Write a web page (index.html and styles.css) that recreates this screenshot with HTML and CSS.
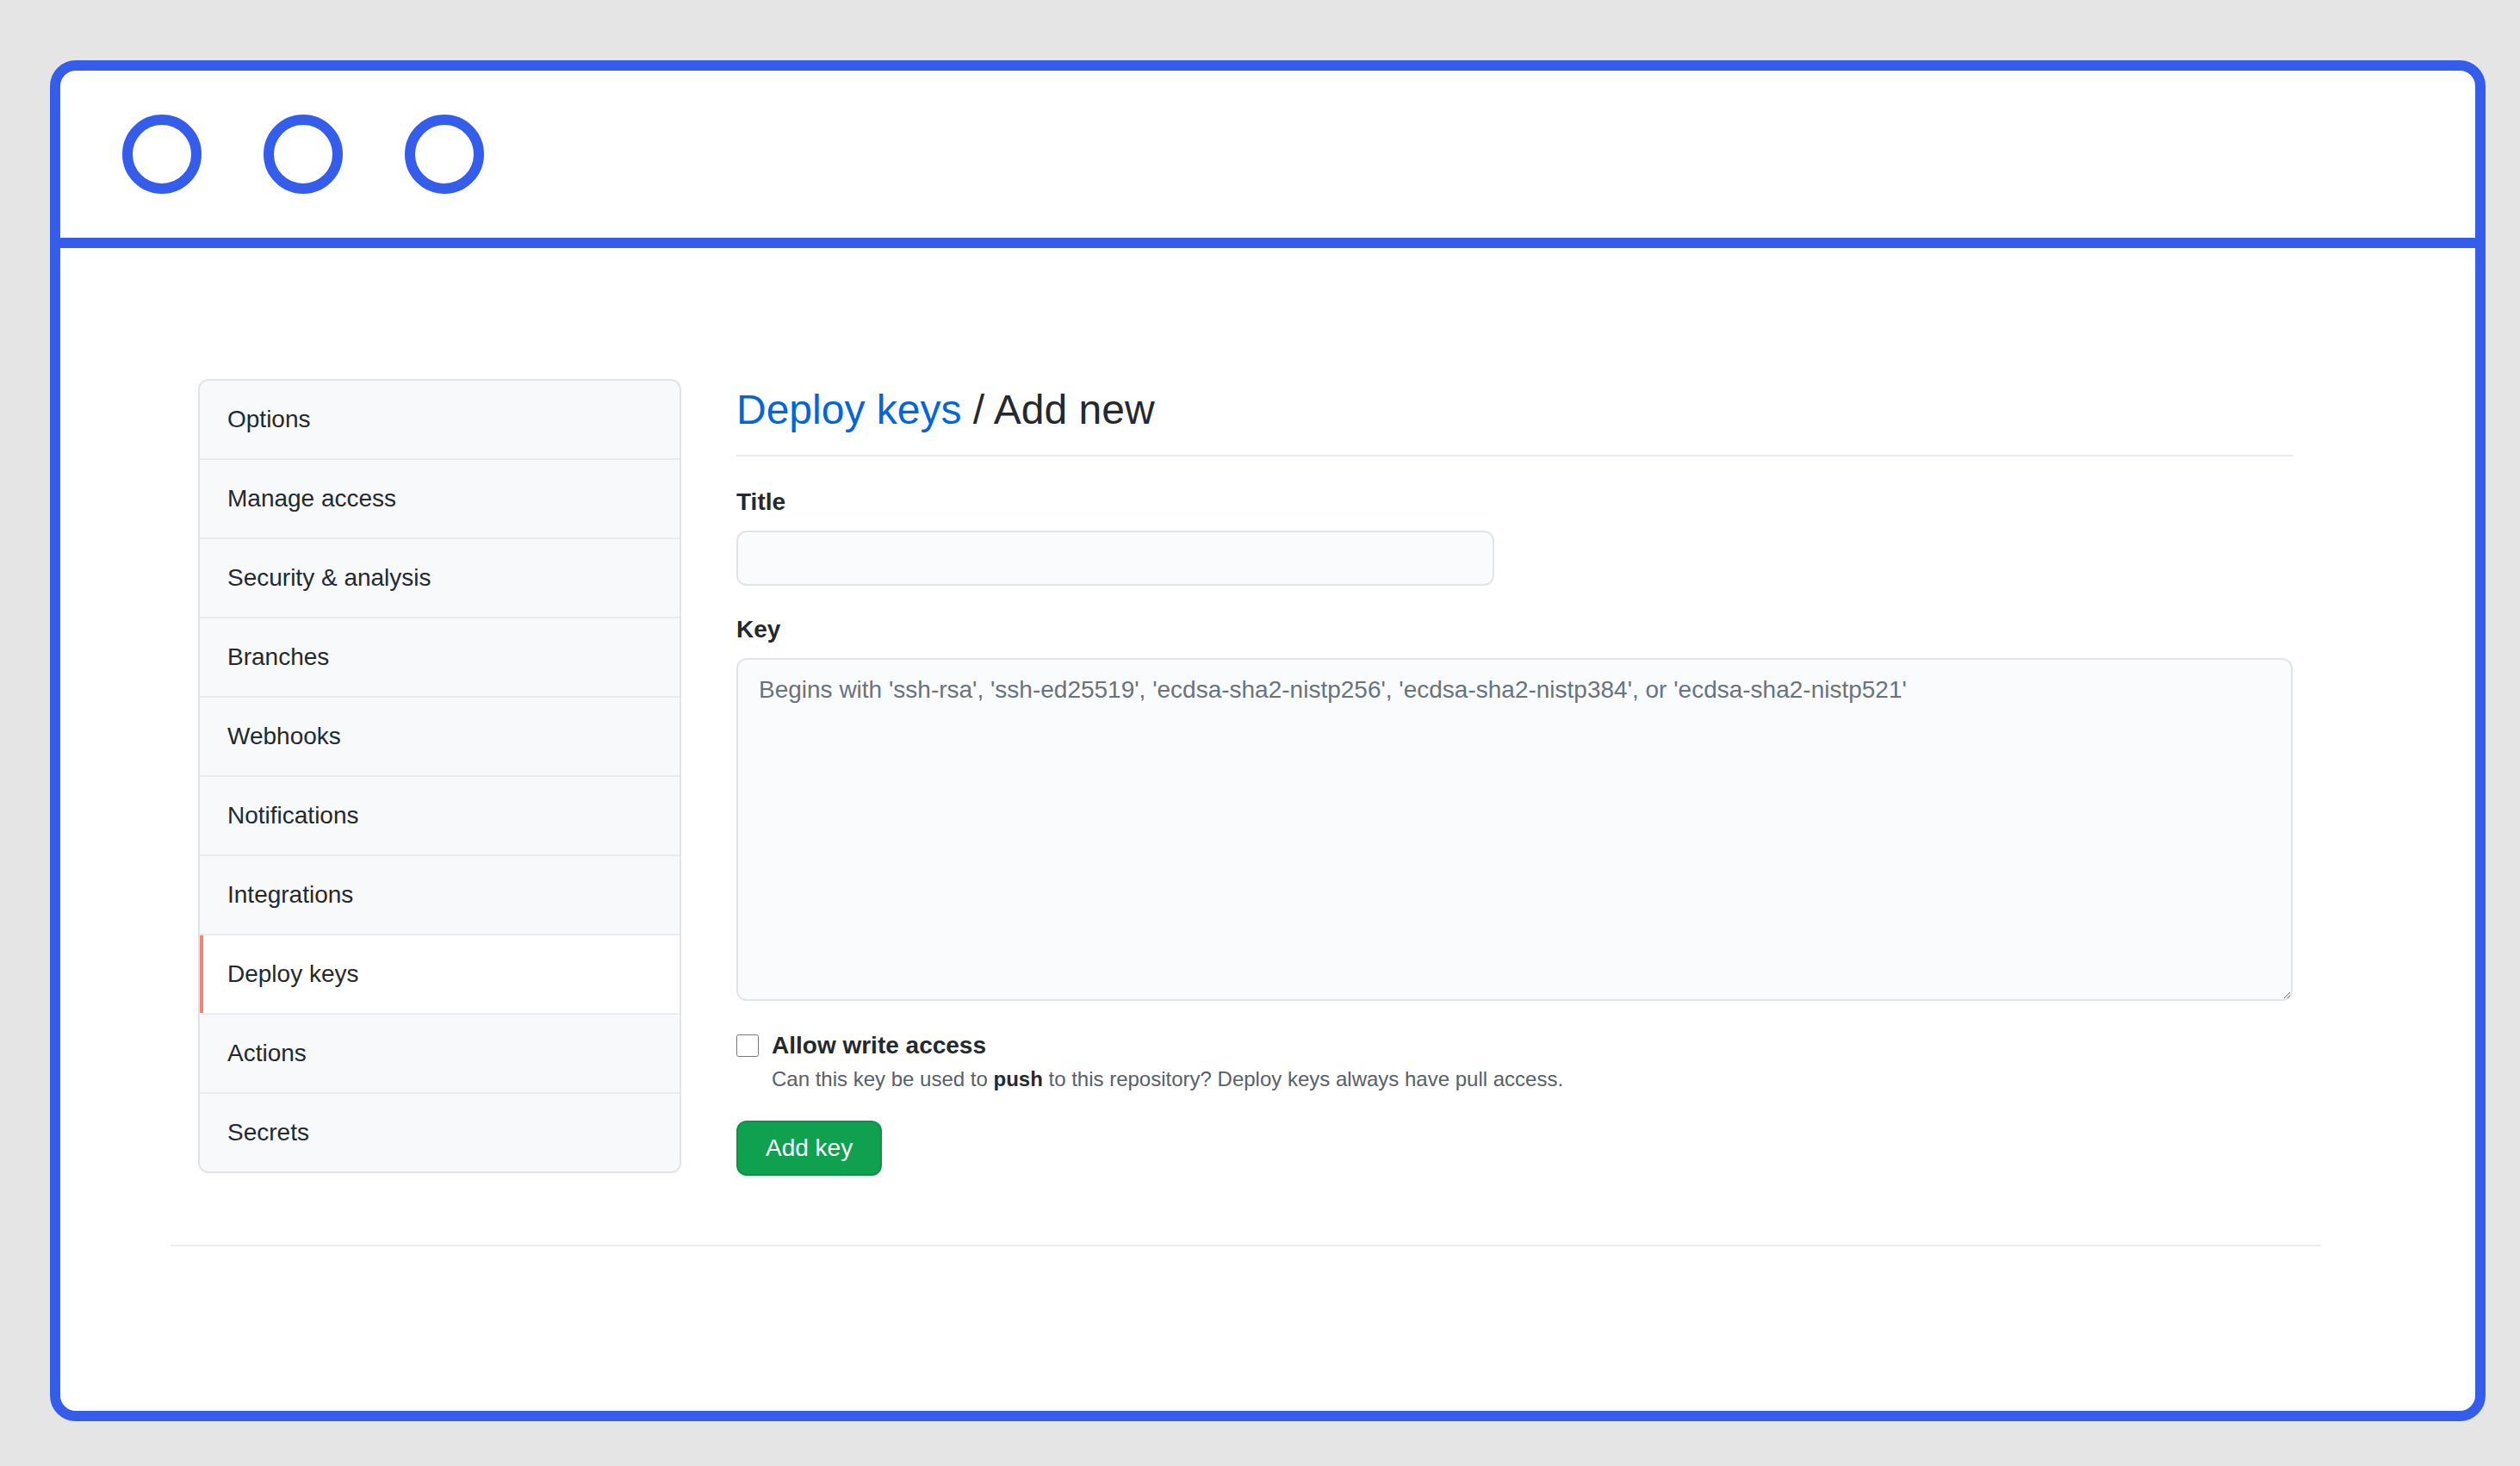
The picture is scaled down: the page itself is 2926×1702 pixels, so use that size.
FILE: index.html
```html
<!DOCTYPE html>
<html lang="en">
<head>
<meta charset="utf-8">
<title>Deploy keys / Add new</title>
<link rel="stylesheet" href="styles.css">
</head>
<body>
<div class="frame">
  <div class="titlebar">
    <span class="dot"></span>
    <span class="dot"></span>
    <span class="dot"></span>
  </div>
  <div class="page">
    <div class="container">
      <div class="layout">
        <nav class="menu">
          <a class="menu-item">Options</a>
          <a class="menu-item">Manage access</a>
          <a class="menu-item">Security &amp; analysis</a>
          <a class="menu-item">Branches</a>
          <a class="menu-item">Webhooks</a>
          <a class="menu-item">Notifications</a>
          <a class="menu-item">Integrations</a>
          <a class="menu-item selected">Deploy keys</a>
          <a class="menu-item">Actions</a>
          <a class="menu-item">Secrets</a>
        </nav>
        <main class="main">
          <h2 class="subhead"><a class="subhead-link">Deploy keys</a> / Add new</h2>
          <form class="form">
            <label class="label" for="title">Title</label>
            <input class="input" id="title" type="text">
            <label class="label label-key" for="key">Key</label>
            <textarea class="textarea" id="key" placeholder="Begins with 'ssh-rsa', 'ssh-ed25519', 'ecdsa-sha2-nistp256', 'ecdsa-sha2-nistp384', or 'ecdsa-sha2-nistp521'"></textarea>
            <div class="checkbox-group">
              <label class="checkbox-label"><input class="checkbox" type="checkbox"> Allow write access</label>
              <p class="note">Can this key be used to <strong>push</strong> to this repository? Deploy keys always have pull access.</p>
            </div>
            <button class="btn" type="button">Add key</button>
          </form>
        </main>
      </div>
      <div class="footer"></div>
    </div>
  </div>
</div>
</body>
</html>
```

FILE: styles.css
```css
html, body {
  margin: 0;
  padding: 0;
}
body {
  background: #e5e5e5;
  font-family: "Liberation Sans", Arial, Helvetica, sans-serif;
  color: #24292e;
  width: 2926px;
  height: 1702px;
  overflow: hidden;
}
.frame {
  box-sizing: border-box;
  margin: 70px 0 0 58px;
  width: 2828px;
  height: 1580px;
  border: 12px solid #355dec;
  border-radius: 30px;
  background: #ffffff;
  overflow: hidden;
}
.titlebar {
  height: 194px;
  border-bottom: 12px solid #355dec;
  display: flex;
  align-items: center;
  gap: 72px;
  padding-left: 72px;
}
.dot {
  box-sizing: border-box;
  width: 92px;
  height: 92px;
  border: 12px solid #355dec;
  border-radius: 50%;
  background: #ffffff;
}
.page {
  padding: 152px 0 0 128px;
}
.container {
  width: 2496px;
}
.layout {
  display: flex;
  align-items: flex-start;
  gap: 64px;
  padding: 0 32px;
}
.menu {
  width: 561px;
  flex: none;
  box-sizing: border-box;
  border: 2px solid #e1e4e8;
  border-radius: 12px;
  background: #f7f9fb;
  overflow: hidden;
  display: flex;
  flex-direction: column;
}
.menu-item {
  display: block;
  padding: 24px 32px;
  font-size: 28px;
  line-height: 42px;
  color: #24292e;
  border-bottom: 2px solid #e8ebef;
}
.menu-item:last-child {
  border-bottom: none;
}
.menu-item.selected {
  background: #ffffff;
  box-shadow: inset 4px 0 0 #f9826c;
}
.main {
  flex: 1;
  min-width: 0;
}
.subhead {
  margin: 0 0 32px 0;
  font-size: 48px;
  line-height: 72px;
  font-weight: 400;
  padding-bottom: 16px;
  border-bottom: 2px solid #e8ebef;
  color: #24292e;
}
.subhead-link {
  color: #0366d6;
}
.form {
  display: flex;
  flex-direction: column;
  align-items: flex-start;
}
.label {
  display: block;
  font-size: 28px;
  line-height: 42px;
  font-weight: 700;
  margin-bottom: 12px;
}
.label-key {
  margin-top: 30px;
}
.input {
  box-sizing: border-box;
  width: 880px;
  height: 64px;
  border: 2px solid #e1e4e8;
  border-radius: 12px;
  background: #fafbfc;
  padding: 10px 24px;
  font-family: inherit;
  font-size: 28px;
  margin: 0;
}
.textarea {
  box-sizing: border-box;
  width: 100%;
  height: 398px;
  border: 2px solid #e1e4e8;
  border-radius: 12px;
  background: #fafbfc;
  padding: 15px 24px 10px 24px;
  font-family: inherit;
  font-size: 28px;
  line-height: 40px;
  color: #24292e;
  resize: vertical;
  margin: 0;
}
.textarea::placeholder {
  color: #6a737d;
}
.checkbox-group {
  margin-top: 31px;
}
.checkbox-label {
  display: flex;
  align-items: center;
  gap: 15px;
  font-size: 28px;
  line-height: 42px;
  font-weight: 700;
}
.checkbox {
  width: 26px;
  height: 26px;
  margin: 0;
}
.note {
  margin: 0;
  padding-left: 41px;
  font-size: 24px;
  line-height: 36px;
  color: #586069;
}
.note strong {
  color: #24292e;
}
.btn {
  margin-top: 30px;
  padding: 10px 32px;
  font-family: inherit;
  font-size: 28px;
  line-height: 40px;
  font-weight: 500;
  color: #ffffff;
  background: #0fa150;
  border: 2px solid rgba(27, 31, 35, 0.12);
  border-radius: 12px;
}
.footer {
  margin-top: 80px;
  border-top: 2px solid #eaecef;
}
```
